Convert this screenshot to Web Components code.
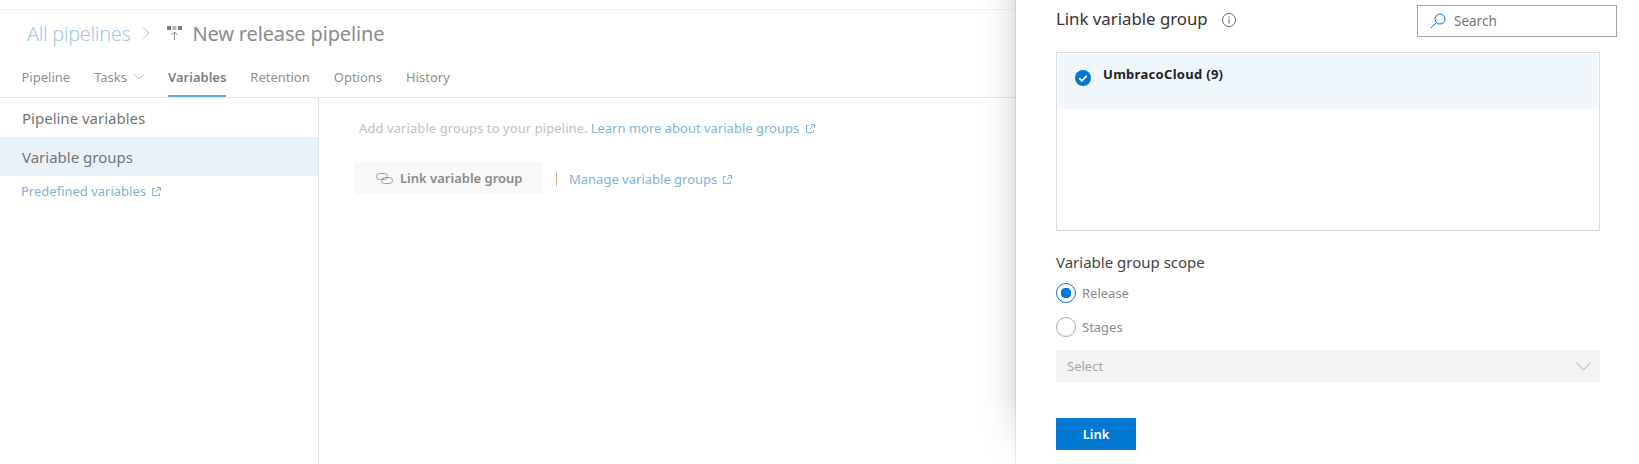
<!DOCTYPE html>
<html>
<head>
<meta charset="utf-8">
<title>New release pipeline</title>
<style>
  html, body { margin: 0; height: 100%; background: #fff; overflow: hidden; }
  body { font-family: "Noto Sans", "Open Sans", sans-serif; }
</style>
</head>
<body>
<rp-page>
  <rp-breadcrumb root="All pipelines" title="New release pipeline"></rp-breadcrumb>
  <rp-tabs>
    <rp-tab>Pipeline</rp-tab>
    <rp-tab menu>Tasks</rp-tab>
    <rp-tab active>Variables</rp-tab>
    <rp-tab>Retention</rp-tab>
    <rp-tab>Options</rp-tab>
    <rp-tab>History</rp-tab>
  </rp-tabs>
  <rp-main>
    <rp-sidenav slot="nav"></rp-sidenav>
    <rp-groups-empty></rp-groups-empty>
  </rp-main>
</rp-page>
<rp-panel>
  <rp-panel-head></rp-panel-head>
  <rp-group-list>
    <rp-group-row>UmbracoCloud (9)</rp-group-row>
  </rp-group-list>
  <rp-scope></rp-scope>
  <rp-primary>Link</rp-primary>
</rp-panel>

<script>
const EXT_ICON = `<svg width="9" height="9" viewBox="0 0 9 9" fill="none" stroke="currentColor" stroke-width="1">
  <path d="M3 1.5H.5v7h7V6M4 5l3.8-3.8M5 .5h3.5V4"/></svg>`;

class Base extends HTMLElement {
    constructor() {
        super();
        this.attachShadow({ mode: "open" });
    }
    connectedCallback() {
        this.render();
    }
}

class RpPage extends Base {
    render() {
        this.shadowRoot.innerHTML = `
        <style>
          :host { display: flex; flex-direction: column; height: 464px; padding-top: 9px; box-sizing: border-box; }
          .line { height: 1px; background: #f3f3f3; }
        </style>
        <div class="line"></div>
        <slot></slot>`;
    }
}

class RpBreadcrumb extends Base {
    render() {
        this.shadowRoot.innerHTML = `
        <style>
          :host { display: flex; align-items: center; height: 46px; padding-left: 27px; font-size: 20px; box-sizing: border-box; }
          .root { color: #a4c8e8; font-weight: 300; letter-spacing: -.35px; }
          .sep { margin: 0 17px 0 12px; display: flex; }
          .icon { display: flex; margin-right: 10px; }
          .title { color: #8c8c8c; letter-spacing: -.15px; }
        </style>
        <span class="root">${this.getAttribute("root")}</span>
        <span class="sep"><svg width="8" height="14" viewBox="0 0 8 14" fill="none" stroke="#b8b8b8"><path d="M.5 1l6.5 6-6.5 6"/></svg></span>
        <span class="icon"><svg width="15" height="15" viewBox="0 0 15 15">
          <rect x="0" y="0" width="4" height="4" fill="#7a7a7a"/><rect x="5.5" y="0" width="4" height="4" fill="#b5b5b5"/><rect x="11" y="0" width="4" height="4" fill="#7a7a7a"/>
          <path d="M7.5 14V6.5M4.5 9l3-3 3 3" fill="none" stroke="#8a8a8a"/></svg></span>
        <span class="title">${this.getAttribute("title")}</span>`;
    }
}

class RpTabs extends Base {
    render() {
        this.shadowRoot.innerHTML = `
        <style>
          :host { display: flex; gap: 24px; height: 42px; padding-left: 21.5px; box-sizing: border-box; border-bottom: 1px solid #e8e8e8; }
        </style>
        <slot></slot>`;
    }
}

class RpTab extends Base {
    render() {
        this.shadowRoot.innerHTML = `
        <style>
          :host { display: flex; align-items: center; gap: 7px; height: 41px; padding-top: 1px; box-sizing: border-box; font-size: 13px; color: #8f8f8f; }
          :host([active]) { color: #7e7e7e; font-weight: 600; border-bottom: 2px solid #64aee8; padding-top: 3px; }
        </style>
        <slot></slot>
        ${this.hasAttribute("menu") ? `<svg width="10" height="6" viewBox="0 0 10 6" fill="none" stroke="#c4c4c4"><path d="M.5.5L5 5 9.5.5"/></svg>` : ""}`;
    }
}

class RpMain extends Base {
    render() {
        this.shadowRoot.innerHTML = `
        <style>
          :host { display: flex; flex: 1; min-height: 0; }
        </style>
        <slot name="nav"></slot>
        <slot></slot>`;
    }
}

class RpSidenav extends Base {
    render() {
        this.shadowRoot.innerHTML = `
        <style>
          :host { display: block; width: 319px; box-sizing: border-box; border-right: 1px solid #e0e0e0; color: #757575; font-size: 15px; }
          .row { height: 39px; display: flex; align-items: center; padding-left: 22px; }
          .row.on { background: #eaf2f9; }
          .link { height: 30px; display: flex; align-items: center; gap: 6px; padding-left: 21px; font-size: 13px; color: #82b2d8; }
        </style>
        <div class="row">Pipeline variables</div>
        <div class="row on">Variable groups</div>
        <div class="link">Predefined variables ${EXT_ICON}</div>`;
    }
}

class RpGroupsEmpty extends Base {
    render() {
        this.shadowRoot.innerHTML = `
        <style>
          :host { display: block; padding: 20px 0 0 36px; font-size: 13px; }
          .intro { height: 20px; display: flex; align-items: center; padding-left: 4px; color: #c2c2c2; letter-spacing: .08px; }
          .intro a { margin-left: 3px; color: #82b2d8; display: flex; align-items: center; gap: 7px; letter-spacing: 0; }
          .actions { margin-top: 24px; display: flex; align-items: center; }
          button { all: unset; box-sizing: border-box; width: 188px; height: 32px; padding-left: 21px; background: #f8f8f8; display: flex; align-items: center; gap: 7px; color: #8a8a8a; font-weight: 600; font-size: 13px; }
          .sep { width: 1px; height: 14px; background: #d9ae80; margin: 2px 12px 0 13px; }
          .manage { margin-top: 2px; color: #82b2d8; display: flex; align-items: center; gap: 6px; }
        </style>
        <div class="intro">Add variable groups to your pipeline.<a>Learn more about variable groups ${EXT_ICON}</a></div>
        <div class="actions">
          <button><svg width="17" height="11" viewBox="0 0 17 11" fill="none" stroke="#9a9a9a"><rect x=".5" y=".5" width="11" height="6" rx="3"/><rect x="5.5" y="4.5" width="11" height="6" rx="3"/></svg>Link variable group</button>
          <span class="sep"></span>
          <a class="manage">Manage variable groups ${EXT_ICON}</a>
        </div>`;
    }
}

class RpPanel extends Base {
    render() {
        this.shadowRoot.innerHTML = `
        <style>
          :host { display: block; position: absolute; top: 0; left: 1015px; right: 0; height: 464px; box-sizing: border-box; background: #fff; border-left: 1px solid #ebebeb; padding: 0 39px 0 40px; }
          /* the shadow dies out before the bottom of the window */
          :host::before { content: ""; position: absolute; top: 0; bottom: 0; right: 100%; width: 36px;
            background: linear-gradient(to left, rgba(0,0,0,.11), rgba(0,0,0,.06) 25%, rgba(0,0,0,.025) 55%, transparent);
            -webkit-mask-image: linear-gradient(to bottom, #000 395px, transparent 464px);
            mask-image: linear-gradient(to bottom, #000 395px, transparent 464px); }
        </style>
        <slot></slot>`;
    }
}

class RpPanelHead extends Base {
    render() {
        this.shadowRoot.innerHTML = `
        <style>
          :host { display: flex; align-items: center; height: 41px; margin-right: -17px; color: #333; }
          .title { font-size: 16.8px; position: relative; top: -2px; }
          .info { display: flex; margin-left: 13px; position: relative; top: -1px; }
          .search { margin-left: auto; width: 200px; height: 32px; box-sizing: border-box; border: 1px solid #a6a6a6; display: flex; align-items: center; padding-left: 12px; gap: 8px; font-size: 13.5px; color: #757575; }
        </style>
        <span class="title">Link variable group</span>
        <span class="info"><svg width="16" height="16" viewBox="0 0 16 16" fill="none" stroke="#666"><circle cx="8" cy="8" r="6.5"/><path d="M8 7v4.5M8 4.5v1.2"/></svg></span>
        <div class="search"><svg width="16" height="16" viewBox="0 0 16 16" fill="none" stroke="#0078d4"><circle cx="10" cy="6" r="5"/><path d="M6.4 9.6L.8 15.2"/></svg>Search</div>`;
    }
}

class RpGroupList extends Base {
    render() {
        this.shadowRoot.innerHTML = `
        <style>
          :host { display: block; margin-top: 11px; height: 179px; box-sizing: border-box; border: 1px solid #dcdcdc; padding: 1px; }
        </style>
        <slot></slot>`;
    }
}

class RpGroupRow extends Base {
    render() {
        this.shadowRoot.innerHTML = `
        <style>
          :host { display: flex; height: 55px; box-sizing: border-box; background: #eff6fc; padding: 16px 0 0 17px; font-size: 13px; font-weight: 700; color: #222; letter-spacing: .3px; }
          svg { margin-right: 12px; flex: none; }
          .txt { position: relative; top: -4px; line-height: 16px; }
        </style>
        <svg width="16" height="16" viewBox="0 0 16 16"><circle cx="8" cy="8" r="8" fill="#0078d4"/><path d="M4.2 8.2l2.6 2.6 5-5" fill="none" stroke="#fff" stroke-width="1.8"/></svg>
        <span class="txt"><slot></slot></span>`;
    }
}

class RpScope extends Base {
    render() {
        this.shadowRoot.innerHTML = `
        <style>
          :host { display: block; margin-top: 20px; }
          .label { height: 22px; line-height: 22px; font-size: 15px; color: #444; }
          .radio { display: flex; align-items: center; gap: 6px; height: 20px; font-size: 13px; color: #8a8a8a; }
          .radio.one { margin-top: 10px; }
          .radio.two { margin-top: 14px; }
          .dot { width: 20px; height: 20px; box-sizing: border-box; border-radius: 50%; border: 1px solid #aaa; background: #fff; }
          .dot.on { border-color: #0078d4; background: radial-gradient(circle, #0078d4 0 5px, #fff 5.5px); }
          .select { margin-top: 13px; height: 32px; background: #f3f3f3; border-radius: 2px; display: flex; align-items: center; justify-content: space-between; padding: 0 9px 0 11px; font-size: 13px; color: #a6a6a6; }
        </style>
        <div class="label">Variable group scope</div>
        <div class="radio one"><span class="dot on"></span>Release</div>
        <div class="radio two"><span class="dot"></span>Stages</div>
        <div class="select">Select<svg width="15" height="9" viewBox="0 0 15 9" fill="none" stroke="#a6a6a6"><path d="M.5.8l7 7 7-7"/></svg></div>`;
    }
}

class RpPrimary extends Base {
    render() {
        this.shadowRoot.innerHTML = `
        <style>
          :host { display: flex; align-items: center; justify-content: center; width: 80px; height: 32px; margin-top: 36px; background: #0078d4; color: #fff; font-size: 13px; font-weight: 600; }
        </style>
        <slot></slot>`;
    }
}

customElements.define("rp-page", RpPage);
customElements.define("rp-breadcrumb", RpBreadcrumb);
customElements.define("rp-tabs", RpTabs);
customElements.define("rp-tab", RpTab);
customElements.define("rp-main", RpMain);
customElements.define("rp-sidenav", RpSidenav);
customElements.define("rp-groups-empty", RpGroupsEmpty);
customElements.define("rp-panel", RpPanel);
customElements.define("rp-panel-head", RpPanelHead);
customElements.define("rp-group-list", RpGroupList);
customElements.define("rp-group-row", RpGroupRow);
customElements.define("rp-scope", RpScope);
customElements.define("rp-primary", RpPrimary);
</script>
</body>
</html>
